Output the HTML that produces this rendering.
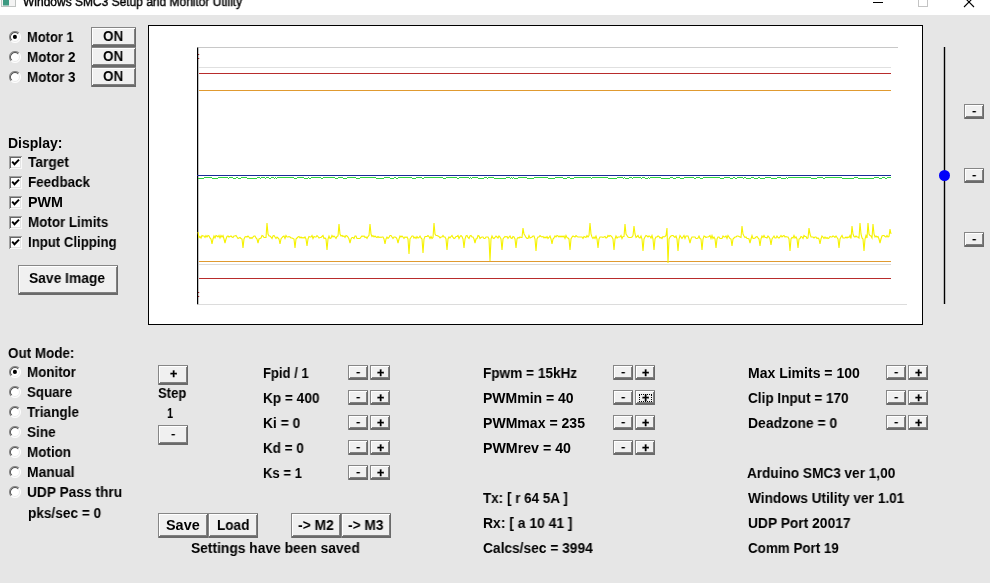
<!DOCTYPE html>
<html><head><meta charset="utf-8"><title>Windows SMC3 Setup and Monitor Utility</title>
<style>
html,body{margin:0;padding:0;}
body{width:990px;height:583px;overflow:hidden;background:#e6e6e6;position:relative;font-family:"Liberation Sans",Arial,sans-serif;font-weight:bold;font-size:14px;color:#000;}
.t{position:absolute;white-space:nowrap;line-height:18px;height:18px;transform-origin:0 50%;will-change:transform;}
.btn{position:absolute;box-sizing:border-box;background:#f0f0f0;box-shadow:inset 1px 1px 0 #868686,inset -1px -2px 0 #6a6a6a,inset 2px 2px 0 #fff,inset -2px -3px 0 #808080;}
.radio{position:absolute;width:12px;height:12px;}
.cb{position:absolute;width:13px;height:13px;box-sizing:border-box;background:#fff;box-shadow:inset 1px 1px 0 #a0a0a0,inset -1px -1px 0 #fafafa,inset 2px 2px 0 #666,inset -2px -2px 0 #e4e4e4;}
.cb svg,.radio svg{position:absolute;left:0;top:0;}
#title{position:absolute;left:0;top:0;width:990px;height:15px;background:#fff;overflow:hidden;}
#panel{position:absolute;left:148px;top:25px;width:775px;height:300px;box-sizing:border-box;border:1px solid #000;background:#fff;}
</style></head><body>

<div id="title"><svg style="position:absolute;left:0;top:0" width="20" height="8"><rect x="1.5" y="-1" width="14" height="7.5" fill="#f4f4f4" stroke="#c0c4c2"/><rect x="3" y="0" width="6" height="5.5" fill="#3d9a82"/></svg>
<svg style="position:absolute;left:860px;top:0" width="130" height="15"><rect x="13" y="2" width="10" height="1" fill="#000"/><rect x="58.5" y="-3.5" width="9" height="10" fill="none" stroke="#c4c4c4"/><path d="M104 -3L114 7M114 -3L104 7" stroke="#000" stroke-width="1.1"/></svg></div>
<div class="radio" style="left:9px;top:31px"><svg width="12" height="12" viewBox="0 0 12 12"><circle cx="6" cy="6" r="5.4" fill="#fff"/><path d="M2.1 9.9A5.5 5.5 0 0 1 9.9 2.1" fill="none" stroke="#8a8a8a" stroke-width="1.1"/><path d="M2.8 9.2A4.5 4.5 0 0 1 9.2 2.8" fill="none" stroke="#505050" stroke-width="1.1"/><path d="M2.1 9.9A5.5 5.5 0 0 0 9.9 2.1" fill="none" stroke="#fdfdfd" stroke-width="1.1"/><path d="M2.8 9.2A4.5 4.5 0 0 0 9.2 2.8" fill="none" stroke="#ececec" stroke-width="1"/><circle cx="5.9" cy="5.9" r="2.05" fill="#000"/></svg></div>
<span class="t" id="t1" style="left:27.00px;top:28.00px;transform:scaleX(0.9217);">Motor 1</span>
<div class="btn" style="left:91px;top:27px;width:45px;height:20px"></div>
<span class="t" id="t2" style="left:103.15px;top:27.00px;transform:scaleX(0.9590);">ON</span>
<div class="radio" style="left:9px;top:51px"><svg width="12" height="12" viewBox="0 0 12 12"><circle cx="6" cy="6" r="5.4" fill="#fff"/><path d="M2.1 9.9A5.5 5.5 0 0 1 9.9 2.1" fill="none" stroke="#8a8a8a" stroke-width="1.1"/><path d="M2.8 9.2A4.5 4.5 0 0 1 9.2 2.8" fill="none" stroke="#505050" stroke-width="1.1"/><path d="M2.1 9.9A5.5 5.5 0 0 0 9.9 2.1" fill="none" stroke="#fdfdfd" stroke-width="1.1"/><path d="M2.8 9.2A4.5 4.5 0 0 0 9.2 2.8" fill="none" stroke="#ececec" stroke-width="1"/></svg></div>
<span class="t" id="t3" style="left:27.00px;top:48.00px;transform:scaleX(0.9587);">Motor 2</span>
<div class="btn" style="left:91px;top:47px;width:45px;height:20px"></div>
<span class="t" id="t4" style="left:103.15px;top:47.00px;transform:scaleX(0.9590);">ON</span>
<div class="radio" style="left:9px;top:71px"><svg width="12" height="12" viewBox="0 0 12 12"><circle cx="6" cy="6" r="5.4" fill="#fff"/><path d="M2.1 9.9A5.5 5.5 0 0 1 9.9 2.1" fill="none" stroke="#8a8a8a" stroke-width="1.1"/><path d="M2.8 9.2A4.5 4.5 0 0 1 9.2 2.8" fill="none" stroke="#505050" stroke-width="1.1"/><path d="M2.1 9.9A5.5 5.5 0 0 0 9.9 2.1" fill="none" stroke="#fdfdfd" stroke-width="1.1"/><path d="M2.8 9.2A4.5 4.5 0 0 0 9.2 2.8" fill="none" stroke="#ececec" stroke-width="1"/></svg></div>
<span class="t" id="t5" style="left:27.00px;top:68.00px;transform:scaleX(0.9598);">Motor 3</span>
<div class="btn" style="left:91px;top:67px;width:45px;height:20px"></div>
<span class="t" id="t6" style="left:103.15px;top:67.00px;transform:scaleX(0.9590);">ON</span>
<span class="t" id="t7" style="left:8.00px;top:134.00px;transform:scaleX(0.9962);">Display:</span>
<div class="cb" style="left:9px;top:156px"><svg width="13" height="13" viewBox="0 0 13 13"><path d="M3.2 5.6L5.5 8.2L10 3.6" fill="none" stroke="#000" stroke-width="2"/></svg></div>
<span class="t" id="t8" style="left:28.00px;top:153.00px;transform:scaleX(0.9815);">Target</span>
<div class="cb" style="left:9px;top:176px"><svg width="13" height="13" viewBox="0 0 13 13"><path d="M3.2 5.6L5.5 8.2L10 3.6" fill="none" stroke="#000" stroke-width="2"/></svg></div>
<span class="t" id="t9" style="left:28.00px;top:173.00px;transform:scaleX(0.9603);">Feedback</span>
<div class="cb" style="left:9px;top:196px"><svg width="13" height="13" viewBox="0 0 13 13"><path d="M3.2 5.6L5.5 8.2L10 3.6" fill="none" stroke="#000" stroke-width="2"/></svg></div>
<span class="t" id="t10" style="left:28.00px;top:193.00px;transform:scaleX(1.0225);">PWM</span>
<div class="cb" style="left:9px;top:216px"><svg width="13" height="13" viewBox="0 0 13 13"><path d="M3.2 5.6L5.5 8.2L10 3.6" fill="none" stroke="#000" stroke-width="2"/></svg></div>
<span class="t" id="t11" style="left:28.00px;top:213.00px;transform:scaleX(0.9554);">Motor Limits</span>
<div class="cb" style="left:9px;top:236px"><svg width="13" height="13" viewBox="0 0 13 13"><path d="M3.2 5.6L5.5 8.2L10 3.6" fill="none" stroke="#000" stroke-width="2"/></svg></div>
<span class="t" id="t12" style="left:28.00px;top:233.00px;transform:scaleX(0.9420);">Input Clipping</span>
<div class="btn" style="left:18px;top:265px;width:100px;height:30px"></div>
<span class="t" id="t13" style="left:28.86px;top:269.30px;transform:scaleX(0.9869);">Save Image</span>
<span class="t" id="t14" style="left:8.00px;top:344.00px;transform:scaleX(0.9589);">Out Mode:</span>
<div class="radio" style="left:9px;top:366px"><svg width="12" height="12" viewBox="0 0 12 12"><circle cx="6" cy="6" r="5.4" fill="#fff"/><path d="M2.1 9.9A5.5 5.5 0 0 1 9.9 2.1" fill="none" stroke="#8a8a8a" stroke-width="1.1"/><path d="M2.8 9.2A4.5 4.5 0 0 1 9.2 2.8" fill="none" stroke="#505050" stroke-width="1.1"/><path d="M2.1 9.9A5.5 5.5 0 0 0 9.9 2.1" fill="none" stroke="#fdfdfd" stroke-width="1.1"/><path d="M2.8 9.2A4.5 4.5 0 0 0 9.2 2.8" fill="none" stroke="#ececec" stroke-width="1"/><circle cx="5.9" cy="5.9" r="2.05" fill="#000"/></svg></div>
<span class="t" id="t15" style="left:27.00px;top:363.00px;transform:scaleX(0.9532);">Monitor</span>
<div class="radio" style="left:9px;top:386px"><svg width="12" height="12" viewBox="0 0 12 12"><circle cx="6" cy="6" r="5.4" fill="#fff"/><path d="M2.1 9.9A5.5 5.5 0 0 1 9.9 2.1" fill="none" stroke="#8a8a8a" stroke-width="1.1"/><path d="M2.8 9.2A4.5 4.5 0 0 1 9.2 2.8" fill="none" stroke="#505050" stroke-width="1.1"/><path d="M2.1 9.9A5.5 5.5 0 0 0 9.9 2.1" fill="none" stroke="#fdfdfd" stroke-width="1.1"/><path d="M2.8 9.2A4.5 4.5 0 0 0 9.2 2.8" fill="none" stroke="#ececec" stroke-width="1"/></svg></div>
<span class="t" id="t16" style="left:27.00px;top:383.00px;transform:scaleX(0.9503);">Square</span>
<div class="radio" style="left:9px;top:406px"><svg width="12" height="12" viewBox="0 0 12 12"><circle cx="6" cy="6" r="5.4" fill="#fff"/><path d="M2.1 9.9A5.5 5.5 0 0 1 9.9 2.1" fill="none" stroke="#8a8a8a" stroke-width="1.1"/><path d="M2.8 9.2A4.5 4.5 0 0 1 9.2 2.8" fill="none" stroke="#505050" stroke-width="1.1"/><path d="M2.1 9.9A5.5 5.5 0 0 0 9.9 2.1" fill="none" stroke="#fdfdfd" stroke-width="1.1"/><path d="M2.8 9.2A4.5 4.5 0 0 0 9.2 2.8" fill="none" stroke="#ececec" stroke-width="1"/></svg></div>
<span class="t" id="t17" style="left:27.00px;top:403.00px;transform:scaleX(0.9661);">Triangle</span>
<div class="radio" style="left:9px;top:426px"><svg width="12" height="12" viewBox="0 0 12 12"><circle cx="6" cy="6" r="5.4" fill="#fff"/><path d="M2.1 9.9A5.5 5.5 0 0 1 9.9 2.1" fill="none" stroke="#8a8a8a" stroke-width="1.1"/><path d="M2.8 9.2A4.5 4.5 0 0 1 9.2 2.8" fill="none" stroke="#505050" stroke-width="1.1"/><path d="M2.1 9.9A5.5 5.5 0 0 0 9.9 2.1" fill="none" stroke="#fdfdfd" stroke-width="1.1"/><path d="M2.8 9.2A4.5 4.5 0 0 0 9.2 2.8" fill="none" stroke="#ececec" stroke-width="1"/></svg></div>
<span class="t" id="t18" style="left:27.00px;top:423.00px;transform:scaleX(0.9706);">Sine</span>
<div class="radio" style="left:9px;top:446px"><svg width="12" height="12" viewBox="0 0 12 12"><circle cx="6" cy="6" r="5.4" fill="#fff"/><path d="M2.1 9.9A5.5 5.5 0 0 1 9.9 2.1" fill="none" stroke="#8a8a8a" stroke-width="1.1"/><path d="M2.8 9.2A4.5 4.5 0 0 1 9.2 2.8" fill="none" stroke="#505050" stroke-width="1.1"/><path d="M2.1 9.9A5.5 5.5 0 0 0 9.9 2.1" fill="none" stroke="#fdfdfd" stroke-width="1.1"/><path d="M2.8 9.2A4.5 4.5 0 0 0 9.2 2.8" fill="none" stroke="#ececec" stroke-width="1"/></svg></div>
<span class="t" id="t19" style="left:27.00px;top:443.00px;transform:scaleX(0.9592);">Motion</span>
<div class="radio" style="left:9px;top:466px"><svg width="12" height="12" viewBox="0 0 12 12"><circle cx="6" cy="6" r="5.4" fill="#fff"/><path d="M2.1 9.9A5.5 5.5 0 0 1 9.9 2.1" fill="none" stroke="#8a8a8a" stroke-width="1.1"/><path d="M2.8 9.2A4.5 4.5 0 0 1 9.2 2.8" fill="none" stroke="#505050" stroke-width="1.1"/><path d="M2.1 9.9A5.5 5.5 0 0 0 9.9 2.1" fill="none" stroke="#fdfdfd" stroke-width="1.1"/><path d="M2.8 9.2A4.5 4.5 0 0 0 9.2 2.8" fill="none" stroke="#ececec" stroke-width="1"/></svg></div>
<span class="t" id="t20" style="left:27.00px;top:463.00px;transform:scaleX(0.9873);">Manual</span>
<div class="radio" style="left:9px;top:486px"><svg width="12" height="12" viewBox="0 0 12 12"><circle cx="6" cy="6" r="5.4" fill="#fff"/><path d="M2.1 9.9A5.5 5.5 0 0 1 9.9 2.1" fill="none" stroke="#8a8a8a" stroke-width="1.1"/><path d="M2.8 9.2A4.5 4.5 0 0 1 9.2 2.8" fill="none" stroke="#505050" stroke-width="1.1"/><path d="M2.1 9.9A5.5 5.5 0 0 0 9.9 2.1" fill="none" stroke="#fdfdfd" stroke-width="1.1"/><path d="M2.8 9.2A4.5 4.5 0 0 0 9.2 2.8" fill="none" stroke="#ececec" stroke-width="1"/></svg></div>
<span class="t" id="t21" style="left:27.00px;top:483.00px;transform:scaleX(0.9806);">UDP Pass thru</span>
<span class="t" id="t22" style="left:28.00px;top:504.00px;transform:scaleX(0.9747);">pks/sec = 0</span>
<div class="btn" style="left:158px;top:365px;width:30px;height:20px"></div>
<span class="t" id="t23" style="left:169.69px;top:365.47px;transform:scaleX(1.0000);font-size:12.5px;-webkit-text-stroke:0.3px #000;">+</span>
<span class="t" id="t24" style="left:158.00px;top:384.00px;transform:scaleX(0.9355);">Step</span>
<span class="t" id="t25" style="left:167.00px;top:404.00px;transform:scaleX(0.8000);">1</span>
<div class="btn" style="left:158px;top:425px;width:30px;height:20px"></div>
<span class="t" id="t26" style="left:170.62px;top:424.50px;transform:scaleX(0.9308);font-weight:normal;-webkit-text-stroke:0.2px #000;">-</span>
<div class="btn" style="left:158px;top:513px;width:50px;height:25px"></div>
<span class="t" id="t27" style="left:165.74px;top:516.00px;transform:scaleX(1.0297);">Save</span>
<div class="btn" style="left:208px;top:513px;width:50px;height:25px"></div>
<span class="t" id="t28" style="left:217.10px;top:516.00px;transform:scaleX(0.9683);">Load</span>
<div class="btn" style="left:291px;top:513px;width:50px;height:25px"></div>
<span class="t" id="t29" style="left:297.77px;top:516.00px;transform:scaleX(0.9860);">-&gt; M2</span>
<div class="btn" style="left:341px;top:513px;width:50px;height:25px"></div>
<span class="t" id="t30" style="left:347.77px;top:516.00px;transform:scaleX(0.9784);">-&gt; M3</span>
<span class="t" id="t31" style="left:191.00px;top:539.00px;transform:scaleX(0.9856);">Settings have been saved</span>
<span class="t" id="t32" style="left:263.00px;top:364.00px;transform:scaleX(0.9314);">Fpid / 1</span>
<div class="btn" style="left:348px;top:365px;width:20px;height:15px"></div>
<span class="t" id="t33" style="left:355.62px;top:363.00px;transform:scaleX(0.9308);font-weight:normal;-webkit-text-stroke:0.2px #000;">-</span>
<div class="btn" style="left:370px;top:365px;width:20px;height:15px"></div>
<span class="t" id="t34" style="left:376.90px;top:363.87px;transform:scaleX(1.0000);font-size:12.5px;-webkit-text-stroke:0.3px #000;">+</span>
<span class="t" id="t35" style="left:263.00px;top:389.00px;transform:scaleX(0.9735);">Kp = 400</span>
<div class="btn" style="left:348px;top:390px;width:20px;height:15px"></div>
<span class="t" id="t36" style="left:355.62px;top:388.00px;transform:scaleX(0.9308);font-weight:normal;-webkit-text-stroke:0.2px #000;">-</span>
<div class="btn" style="left:370px;top:390px;width:20px;height:15px"></div>
<span class="t" id="t37" style="left:376.90px;top:388.87px;transform:scaleX(1.0000);font-size:12.5px;-webkit-text-stroke:0.3px #000;">+</span>
<span class="t" id="t38" style="left:263.00px;top:414.00px;transform:scaleX(0.9858);">Ki = 0</span>
<div class="btn" style="left:348px;top:415px;width:20px;height:15px"></div>
<span class="t" id="t39" style="left:355.62px;top:413.00px;transform:scaleX(0.9308);font-weight:normal;-webkit-text-stroke:0.2px #000;">-</span>
<div class="btn" style="left:370px;top:415px;width:20px;height:15px"></div>
<span class="t" id="t40" style="left:376.90px;top:413.87px;transform:scaleX(1.0000);font-size:12.5px;-webkit-text-stroke:0.3px #000;">+</span>
<span class="t" id="t41" style="left:263.00px;top:439.00px;transform:scaleX(0.9638);">Kd = 0</span>
<div class="btn" style="left:348px;top:440px;width:20px;height:15px"></div>
<span class="t" id="t42" style="left:355.62px;top:438.00px;transform:scaleX(0.9308);font-weight:normal;-webkit-text-stroke:0.2px #000;">-</span>
<div class="btn" style="left:370px;top:440px;width:20px;height:15px"></div>
<span class="t" id="t43" style="left:376.90px;top:438.87px;transform:scaleX(1.0000);font-size:12.5px;-webkit-text-stroke:0.3px #000;">+</span>
<span class="t" id="t44" style="left:263.00px;top:464.00px;transform:scaleX(0.9380);">Ks = 1</span>
<div class="btn" style="left:348px;top:465px;width:20px;height:15px"></div>
<span class="t" id="t45" style="left:355.62px;top:463.00px;transform:scaleX(0.9308);font-weight:normal;-webkit-text-stroke:0.2px #000;">-</span>
<div class="btn" style="left:370px;top:465px;width:20px;height:15px"></div>
<span class="t" id="t46" style="left:376.90px;top:463.87px;transform:scaleX(1.0000);font-size:12.5px;-webkit-text-stroke:0.3px #000;">+</span>
<span class="t" id="t47" style="left:483.00px;top:364.00px;transform:scaleX(0.9720);">Fpwm = 15kHz</span>
<div class="btn" style="left:613px;top:365px;width:20px;height:15px"></div>
<span class="t" id="t48" style="left:620.62px;top:363.00px;transform:scaleX(0.9308);font-weight:normal;-webkit-text-stroke:0.2px #000;">-</span>
<div class="btn" style="left:635px;top:365px;width:20px;height:15px"></div>
<span class="t" id="t49" style="left:641.90px;top:363.87px;transform:scaleX(1.0000);font-size:12.5px;-webkit-text-stroke:0.3px #000;">+</span>
<span class="t" id="t50" style="left:483.00px;top:389.00px;transform:scaleX(0.9962);">PWMmin = 40</span>
<div class="btn" style="left:613px;top:390px;width:20px;height:15px"></div>
<span class="t" id="t51" style="left:620.62px;top:388.00px;transform:scaleX(0.9308);font-weight:normal;-webkit-text-stroke:0.2px #000;">-</span>
<div class="btn" style="left:635px;top:390px;width:20px;height:15px"></div>
<span class="t" id="t52" style="left:641.90px;top:388.87px;transform:scaleX(1.0000);font-size:12.5px;-webkit-text-stroke:0.3px #000;">+</span>
<span class="t" id="t53" style="left:483.00px;top:414.00px;transform:scaleX(1.0043);">PWMmax = 235</span>
<div class="btn" style="left:613px;top:415px;width:20px;height:15px"></div>
<span class="t" id="t54" style="left:620.62px;top:413.00px;transform:scaleX(0.9308);font-weight:normal;-webkit-text-stroke:0.2px #000;">-</span>
<div class="btn" style="left:635px;top:415px;width:20px;height:15px"></div>
<span class="t" id="t55" style="left:641.90px;top:413.87px;transform:scaleX(1.0000);font-size:12.5px;-webkit-text-stroke:0.3px #000;">+</span>
<span class="t" id="t56" style="left:483.00px;top:439.00px;transform:scaleX(1.0135);">PWMrev = 40</span>
<div class="btn" style="left:613px;top:440px;width:20px;height:15px"></div>
<span class="t" id="t57" style="left:620.62px;top:438.00px;transform:scaleX(0.9308);font-weight:normal;-webkit-text-stroke:0.2px #000;">-</span>
<div class="btn" style="left:635px;top:440px;width:20px;height:15px"></div>
<span class="t" id="t58" style="left:641.90px;top:438.87px;transform:scaleX(1.0000);font-size:12.5px;-webkit-text-stroke:0.3px #000;">+</span>
<span class="t" id="t59" style="left:483.00px;top:489.00px;transform:scaleX(0.9612);">Tx: [ r 64 5A ]</span>
<span class="t" id="t60" style="left:483.00px;top:514.00px;transform:scaleX(0.9917);">Rx: [ a 10 41 ]</span>
<span class="t" id="t61" style="left:483.00px;top:539.00px;transform:scaleX(0.9829);">Calcs/sec = 3994</span>
<span class="t" id="t62" style="left:748.00px;top:364.00px;transform:scaleX(1.0012);">Max Limits = 100</span>
<div class="btn" style="left:886px;top:365px;width:20px;height:15px"></div>
<span class="t" id="t63" style="left:893.62px;top:363.00px;transform:scaleX(0.9308);font-weight:normal;-webkit-text-stroke:0.2px #000;">-</span>
<div class="btn" style="left:908px;top:365px;width:20px;height:15px"></div>
<span class="t" id="t64" style="left:914.90px;top:363.87px;transform:scaleX(1.0000);font-size:12.5px;-webkit-text-stroke:0.3px #000;">+</span>
<span class="t" id="t65" style="left:748.00px;top:389.00px;transform:scaleX(0.9686);">Clip Input = 170</span>
<div class="btn" style="left:886px;top:390px;width:20px;height:15px"></div>
<span class="t" id="t66" style="left:893.62px;top:388.00px;transform:scaleX(0.9308);font-weight:normal;-webkit-text-stroke:0.2px #000;">-</span>
<div class="btn" style="left:908px;top:390px;width:20px;height:15px"></div>
<span class="t" id="t67" style="left:914.90px;top:388.87px;transform:scaleX(1.0000);font-size:12.5px;-webkit-text-stroke:0.3px #000;">+</span>
<span class="t" id="t68" style="left:748.00px;top:414.00px;transform:scaleX(0.9930);">Deadzone = 0</span>
<div class="btn" style="left:886px;top:415px;width:20px;height:15px"></div>
<span class="t" id="t69" style="left:893.62px;top:413.00px;transform:scaleX(0.9308);font-weight:normal;-webkit-text-stroke:0.2px #000;">-</span>
<div class="btn" style="left:908px;top:415px;width:20px;height:15px"></div>
<span class="t" id="t70" style="left:914.90px;top:413.87px;transform:scaleX(1.0000);font-size:12.5px;-webkit-text-stroke:0.3px #000;">+</span>
<span class="t" id="t71" style="left:747.00px;top:464.00px;transform:scaleX(0.9720);">Arduino SMC3 ver 1,00</span>
<span class="t" id="t72" style="left:748.00px;top:489.00px;transform:scaleX(0.9763);">Windows Utility ver 1.01</span>
<span class="t" id="t73" style="left:748.00px;top:514.00px;transform:scaleX(0.9857);">UDP Port 20017</span>
<span class="t" id="t74" style="left:748.00px;top:539.00px;transform:scaleX(0.9577);">Comm Port 19</span>
<div id="panel"></div>
<svg style="position:absolute;left:148px;top:25px" width="775" height="300" viewBox="148 25 775 300" shape-rendering="crispEdges"><rect x="197" y="47" width="701" height="1" fill="#c8c8c8"/><rect x="199" y="67" width="692" height="1" fill="#e0e0e0"/><rect x="199" y="73" width="692" height="1" fill="#b82c2c"/><rect x="199" y="90" width="692" height="1" fill="#e09a30"/><rect x="199" y="261" width="692" height="1" fill="#e09a30"/><rect x="199" y="264" width="692" height="1" fill="#dcdcdc"/><rect x="199" y="278" width="692" height="1" fill="#b82c2c"/><rect x="197" y="304" width="710" height="1" fill="#dcdcdc"/><rect x="197" y="47.6" width="1.25" height="256.6" fill="#000" shape-rendering="auto"/><rect x="198" y="54" width="1.2" height="1" fill="#8a1c1c" shape-rendering="auto"/><rect x="198" y="58" width="1.2" height="1" fill="#8a1c1c" shape-rendering="auto"/><rect x="198" y="292" width="1.2" height="1" fill="#8a1c1c" shape-rendering="auto"/><rect x="198" y="296" width="1.2" height="1" fill="#8a1c1c" shape-rendering="auto"/><rect x="197" y="175" width="694" height="1" fill="#1a2a9a"/><rect x="198" y="178" width="6" height="1" fill="#2fd040"/><rect x="204" y="177" width="6" height="1" fill="#2fd040"/><rect x="210" y="177" width="2" height="1" fill="#2fd040"/><rect x="212" y="178" width="6" height="1" fill="#2fd040"/><rect x="218" y="177" width="2" height="1" fill="#2fd040"/><rect x="220" y="177" width="6" height="1" fill="#2fd040"/><rect x="226" y="177" width="2" height="1" fill="#2fd040"/><rect x="228" y="178" width="1" height="1" fill="#2fd040"/><rect x="229" y="177" width="4" height="1" fill="#2fd040"/><rect x="233" y="178" width="2" height="1" fill="#2fd040"/><rect x="235" y="178" width="1" height="1" fill="#2fd040"/><rect x="236" y="177" width="1" height="1" fill="#2fd040"/><rect x="237" y="177" width="1" height="1" fill="#2fd040"/><rect x="238" y="178" width="2" height="1" fill="#2fd040"/><rect x="240" y="178" width="1" height="1" fill="#2fd040"/><rect x="241" y="177" width="6" height="1" fill="#2fd040"/><rect x="247" y="178" width="6" height="1" fill="#2fd040"/><rect x="253" y="178" width="2" height="1" fill="#2fd040"/><rect x="255" y="178" width="2" height="1" fill="#2fd040"/><rect x="257" y="177" width="3" height="1" fill="#2fd040"/><rect x="260" y="178" width="1" height="1" fill="#2fd040"/><rect x="261" y="177" width="1" height="1" fill="#2fd040"/><rect x="262" y="177" width="3" height="1" fill="#2fd040"/><rect x="265" y="178" width="1" height="1" fill="#2fd040"/><rect x="266" y="177" width="3" height="1" fill="#2fd040"/><rect x="269" y="178" width="2" height="1" fill="#2fd040"/><rect x="271" y="177" width="3" height="1" fill="#2fd040"/><rect x="274" y="178" width="1" height="1" fill="#2fd040"/><rect x="275" y="177" width="1" height="1" fill="#2fd040"/><rect x="276" y="178" width="1" height="1" fill="#2fd040"/><rect x="277" y="177" width="3" height="1" fill="#2fd040"/><rect x="280" y="177" width="1" height="1" fill="#2fd040"/><rect x="281" y="177" width="1" height="1" fill="#2fd040"/><rect x="282" y="177" width="2" height="1" fill="#2fd040"/><rect x="284" y="177" width="6" height="1" fill="#2fd040"/><rect x="290" y="177" width="4" height="1" fill="#2fd040"/><rect x="294" y="178" width="1" height="1" fill="#2fd040"/><rect x="295" y="178" width="2" height="1" fill="#2fd040"/><rect x="297" y="177" width="3" height="1" fill="#2fd040"/><rect x="300" y="177" width="1" height="1" fill="#2fd040"/><rect x="301" y="177" width="3" height="1" fill="#2fd040"/><rect x="304" y="178" width="4" height="1" fill="#2fd040"/><rect x="308" y="177" width="1" height="1" fill="#2fd040"/><rect x="309" y="178" width="2" height="1" fill="#2fd040"/><rect x="311" y="177" width="1" height="1" fill="#2fd040"/><rect x="312" y="177" width="1" height="1" fill="#2fd040"/><rect x="313" y="177" width="6" height="1" fill="#2fd040"/><rect x="319" y="177" width="2" height="1" fill="#2fd040"/><rect x="321" y="178" width="2" height="1" fill="#2fd040"/><rect x="323" y="177" width="2" height="1" fill="#2fd040"/><rect x="325" y="177" width="4" height="1" fill="#2fd040"/><rect x="329" y="177" width="4" height="1" fill="#2fd040"/><rect x="333" y="177" width="2" height="1" fill="#2fd040"/><rect x="335" y="178" width="3" height="1" fill="#2fd040"/><rect x="338" y="177" width="3" height="1" fill="#2fd040"/><rect x="341" y="177" width="2" height="1" fill="#2fd040"/><rect x="343" y="178" width="4" height="1" fill="#2fd040"/><rect x="347" y="177" width="1" height="1" fill="#2fd040"/><rect x="348" y="177" width="2" height="1" fill="#2fd040"/><rect x="350" y="177" width="6" height="1" fill="#2fd040"/><rect x="356" y="178" width="1" height="1" fill="#2fd040"/><rect x="357" y="178" width="3" height="1" fill="#2fd040"/><rect x="360" y="177" width="3" height="1" fill="#2fd040"/><rect x="363" y="177" width="1" height="1" fill="#2fd040"/><rect x="364" y="177" width="1" height="1" fill="#2fd040"/><rect x="365" y="177" width="2" height="1" fill="#2fd040"/><rect x="367" y="177" width="3" height="1" fill="#2fd040"/><rect x="370" y="177" width="6" height="1" fill="#2fd040"/><rect x="376" y="178" width="6" height="1" fill="#2fd040"/><rect x="382" y="178" width="2" height="1" fill="#2fd040"/><rect x="384" y="177" width="4" height="1" fill="#2fd040"/><rect x="388" y="177" width="2" height="1" fill="#2fd040"/><rect x="390" y="178" width="2" height="1" fill="#2fd040"/><rect x="392" y="178" width="2" height="1" fill="#2fd040"/><rect x="394" y="177" width="2" height="1" fill="#2fd040"/><rect x="396" y="178" width="2" height="1" fill="#2fd040"/><rect x="398" y="177" width="4" height="1" fill="#2fd040"/><rect x="402" y="177" width="1" height="1" fill="#2fd040"/><rect x="403" y="177" width="1" height="1" fill="#2fd040"/><rect x="404" y="177" width="1" height="1" fill="#2fd040"/><rect x="405" y="177" width="3" height="1" fill="#2fd040"/><rect x="408" y="177" width="4" height="1" fill="#2fd040"/><rect x="412" y="178" width="4" height="1" fill="#2fd040"/><rect x="416" y="177" width="6" height="1" fill="#2fd040"/><rect x="422" y="178" width="2" height="1" fill="#2fd040"/><rect x="424" y="177" width="1" height="1" fill="#2fd040"/><rect x="425" y="177" width="2" height="1" fill="#2fd040"/><rect x="427" y="177" width="1" height="1" fill="#2fd040"/><rect x="428" y="177" width="2" height="1" fill="#2fd040"/><rect x="430" y="177" width="1" height="1" fill="#2fd040"/><rect x="431" y="177" width="3" height="1" fill="#2fd040"/><rect x="434" y="177" width="6" height="1" fill="#2fd040"/><rect x="440" y="177" width="1" height="1" fill="#2fd040"/><rect x="441" y="177" width="2" height="1" fill="#2fd040"/><rect x="443" y="178" width="3" height="1" fill="#2fd040"/><rect x="446" y="177" width="2" height="1" fill="#2fd040"/><rect x="448" y="177" width="3" height="1" fill="#2fd040"/><rect x="451" y="177" width="6" height="1" fill="#2fd040"/><rect x="457" y="178" width="2" height="1" fill="#2fd040"/><rect x="459" y="177" width="1" height="1" fill="#2fd040"/><rect x="460" y="177" width="6" height="1" fill="#2fd040"/><rect x="466" y="177" width="3" height="1" fill="#2fd040"/><rect x="469" y="178" width="1" height="1" fill="#2fd040"/><rect x="470" y="177" width="1" height="1" fill="#2fd040"/><rect x="471" y="178" width="1" height="1" fill="#2fd040"/><rect x="472" y="177" width="3" height="1" fill="#2fd040"/><rect x="475" y="177" width="2" height="1" fill="#2fd040"/><rect x="477" y="177" width="1" height="1" fill="#2fd040"/><rect x="478" y="178" width="3" height="1" fill="#2fd040"/><rect x="481" y="178" width="1" height="1" fill="#2fd040"/><rect x="482" y="178" width="2" height="1" fill="#2fd040"/><rect x="484" y="177" width="3" height="1" fill="#2fd040"/><rect x="487" y="178" width="1" height="1" fill="#2fd040"/><rect x="488" y="177" width="6" height="1" fill="#2fd040"/><rect x="494" y="178" width="4" height="1" fill="#2fd040"/><rect x="498" y="178" width="1" height="1" fill="#2fd040"/><rect x="499" y="178" width="6" height="1" fill="#2fd040"/><rect x="505" y="178" width="1" height="1" fill="#2fd040"/><rect x="506" y="177" width="4" height="1" fill="#2fd040"/><rect x="510" y="178" width="1" height="1" fill="#2fd040"/><rect x="511" y="177" width="1" height="1" fill="#2fd040"/><rect x="512" y="178" width="1" height="1" fill="#2fd040"/><rect x="513" y="177" width="1" height="1" fill="#2fd040"/><rect x="514" y="178" width="4" height="1" fill="#2fd040"/><rect x="518" y="177" width="3" height="1" fill="#2fd040"/><rect x="521" y="177" width="6" height="1" fill="#2fd040"/><rect x="527" y="178" width="6" height="1" fill="#2fd040"/><rect x="533" y="178" width="1" height="1" fill="#2fd040"/><rect x="534" y="177" width="1" height="1" fill="#2fd040"/><rect x="535" y="177" width="1" height="1" fill="#2fd040"/><rect x="536" y="177" width="1" height="1" fill="#2fd040"/><rect x="537" y="177" width="1" height="1" fill="#2fd040"/><rect x="538" y="177" width="6" height="1" fill="#2fd040"/><rect x="544" y="177" width="1" height="1" fill="#2fd040"/><rect x="545" y="177" width="3" height="1" fill="#2fd040"/><rect x="548" y="178" width="2" height="1" fill="#2fd040"/><rect x="550" y="178" width="2" height="1" fill="#2fd040"/><rect x="552" y="178" width="3" height="1" fill="#2fd040"/><rect x="555" y="177" width="6" height="1" fill="#2fd040"/><rect x="561" y="177" width="2" height="1" fill="#2fd040"/><rect x="563" y="178" width="4" height="1" fill="#2fd040"/><rect x="567" y="177" width="3" height="1" fill="#2fd040"/><rect x="570" y="178" width="4" height="1" fill="#2fd040"/><rect x="574" y="177" width="2" height="1" fill="#2fd040"/><rect x="576" y="177" width="4" height="1" fill="#2fd040"/><rect x="580" y="177" width="3" height="1" fill="#2fd040"/><rect x="583" y="177" width="2" height="1" fill="#2fd040"/><rect x="585" y="177" width="6" height="1" fill="#2fd040"/><rect x="591" y="178" width="1" height="1" fill="#2fd040"/><rect x="592" y="177" width="1" height="1" fill="#2fd040"/><rect x="593" y="177" width="2" height="1" fill="#2fd040"/><rect x="595" y="177" width="6" height="1" fill="#2fd040"/><rect x="601" y="177" width="3" height="1" fill="#2fd040"/><rect x="604" y="177" width="4" height="1" fill="#2fd040"/><rect x="608" y="178" width="6" height="1" fill="#2fd040"/><rect x="614" y="178" width="3" height="1" fill="#2fd040"/><rect x="617" y="177" width="6" height="1" fill="#2fd040"/><rect x="623" y="178" width="1" height="1" fill="#2fd040"/><rect x="624" y="177" width="1" height="1" fill="#2fd040"/><rect x="625" y="178" width="1" height="1" fill="#2fd040"/><rect x="626" y="178" width="3" height="1" fill="#2fd040"/><rect x="629" y="177" width="3" height="1" fill="#2fd040"/><rect x="632" y="178" width="1" height="1" fill="#2fd040"/><rect x="633" y="177" width="2" height="1" fill="#2fd040"/><rect x="635" y="177" width="6" height="1" fill="#2fd040"/><rect x="641" y="178" width="1" height="1" fill="#2fd040"/><rect x="642" y="177" width="3" height="1" fill="#2fd040"/><rect x="645" y="178" width="2" height="1" fill="#2fd040"/><rect x="647" y="178" width="1" height="1" fill="#2fd040"/><rect x="648" y="177" width="1" height="1" fill="#2fd040"/><rect x="649" y="178" width="1" height="1" fill="#2fd040"/><rect x="650" y="177" width="3" height="1" fill="#2fd040"/><rect x="653" y="177" width="2" height="1" fill="#2fd040"/><rect x="655" y="177" width="6" height="1" fill="#2fd040"/><rect x="661" y="178" width="2" height="1" fill="#2fd040"/><rect x="663" y="178" width="1" height="1" fill="#2fd040"/><rect x="664" y="178" width="6" height="1" fill="#2fd040"/><rect x="670" y="177" width="1" height="1" fill="#2fd040"/><rect x="671" y="177" width="2" height="1" fill="#2fd040"/><rect x="673" y="178" width="3" height="1" fill="#2fd040"/><rect x="676" y="177" width="2" height="1" fill="#2fd040"/><rect x="678" y="177" width="2" height="1" fill="#2fd040"/><rect x="680" y="178" width="4" height="1" fill="#2fd040"/><rect x="684" y="177" width="4" height="1" fill="#2fd040"/><rect x="688" y="177" width="6" height="1" fill="#2fd040"/><rect x="694" y="178" width="2" height="1" fill="#2fd040"/><rect x="696" y="177" width="1" height="1" fill="#2fd040"/><rect x="697" y="177" width="3" height="1" fill="#2fd040"/><rect x="700" y="178" width="3" height="1" fill="#2fd040"/><rect x="703" y="177" width="2" height="1" fill="#2fd040"/><rect x="705" y="177" width="1" height="1" fill="#2fd040"/><rect x="706" y="177" width="2" height="1" fill="#2fd040"/><rect x="708" y="177" width="1" height="1" fill="#2fd040"/><rect x="709" y="177" width="3" height="1" fill="#2fd040"/><rect x="712" y="177" width="1" height="1" fill="#2fd040"/><rect x="713" y="177" width="1" height="1" fill="#2fd040"/><rect x="714" y="177" width="6" height="1" fill="#2fd040"/><rect x="720" y="178" width="4" height="1" fill="#2fd040"/><rect x="724" y="177" width="3" height="1" fill="#2fd040"/><rect x="727" y="177" width="1" height="1" fill="#2fd040"/><rect x="728" y="177" width="1" height="1" fill="#2fd040"/><rect x="729" y="177" width="1" height="1" fill="#2fd040"/><rect x="730" y="178" width="3" height="1" fill="#2fd040"/><rect x="733" y="177" width="2" height="1" fill="#2fd040"/><rect x="735" y="178" width="2" height="1" fill="#2fd040"/><rect x="737" y="177" width="6" height="1" fill="#2fd040"/><rect x="743" y="178" width="1" height="1" fill="#2fd040"/><rect x="744" y="177" width="2" height="1" fill="#2fd040"/><rect x="746" y="178" width="3" height="1" fill="#2fd040"/><rect x="749" y="178" width="2" height="1" fill="#2fd040"/><rect x="751" y="177" width="3" height="1" fill="#2fd040"/><rect x="754" y="178" width="4" height="1" fill="#2fd040"/><rect x="758" y="177" width="2" height="1" fill="#2fd040"/><rect x="760" y="178" width="2" height="1" fill="#2fd040"/><rect x="762" y="178" width="3" height="1" fill="#2fd040"/><rect x="765" y="177" width="6" height="1" fill="#2fd040"/><rect x="771" y="178" width="4" height="1" fill="#2fd040"/><rect x="775" y="178" width="1" height="1" fill="#2fd040"/><rect x="776" y="178" width="1" height="1" fill="#2fd040"/><rect x="777" y="177" width="4" height="1" fill="#2fd040"/><rect x="781" y="178" width="1" height="1" fill="#2fd040"/><rect x="782" y="178" width="4" height="1" fill="#2fd040"/><rect x="786" y="177" width="1" height="1" fill="#2fd040"/><rect x="787" y="178" width="1" height="1" fill="#2fd040"/><rect x="788" y="177" width="2" height="1" fill="#2fd040"/><rect x="790" y="177" width="6" height="1" fill="#2fd040"/><rect x="796" y="177" width="4" height="1" fill="#2fd040"/><rect x="800" y="177" width="2" height="1" fill="#2fd040"/><rect x="802" y="177" width="6" height="1" fill="#2fd040"/><rect x="808" y="177" width="3" height="1" fill="#2fd040"/><rect x="811" y="178" width="6" height="1" fill="#2fd040"/><rect x="817" y="177" width="3" height="1" fill="#2fd040"/><rect x="820" y="177" width="2" height="1" fill="#2fd040"/><rect x="822" y="177" width="1" height="1" fill="#2fd040"/><rect x="823" y="178" width="2" height="1" fill="#2fd040"/><rect x="825" y="177" width="1" height="1" fill="#2fd040"/><rect x="826" y="177" width="2" height="1" fill="#2fd040"/><rect x="828" y="177" width="2" height="1" fill="#2fd040"/><rect x="830" y="177" width="3" height="1" fill="#2fd040"/><rect x="833" y="177" width="3" height="1" fill="#2fd040"/><rect x="836" y="177" width="6" height="1" fill="#2fd040"/><rect x="842" y="178" width="6" height="1" fill="#2fd040"/><rect x="848" y="178" width="1" height="1" fill="#2fd040"/><rect x="849" y="178" width="3" height="1" fill="#2fd040"/><rect x="852" y="178" width="2" height="1" fill="#2fd040"/><rect x="854" y="177" width="4" height="1" fill="#2fd040"/><rect x="858" y="178" width="4" height="1" fill="#2fd040"/><rect x="862" y="178" width="4" height="1" fill="#2fd040"/><rect x="866" y="178" width="2" height="1" fill="#2fd040"/><rect x="868" y="178" width="2" height="1" fill="#2fd040"/><rect x="870" y="178" width="2" height="1" fill="#2fd040"/><rect x="872" y="178" width="2" height="1" fill="#2fd040"/><rect x="874" y="177" width="2" height="1" fill="#2fd040"/><rect x="876" y="177" width="3" height="1" fill="#2fd040"/><rect x="879" y="178" width="3" height="1" fill="#2fd040"/><rect x="882" y="177" width="3" height="1" fill="#2fd040"/><rect x="885" y="178" width="2" height="1" fill="#2fd040"/><rect x="887" y="177" width="2" height="1" fill="#2fd040"/><rect x="889" y="177" width="2" height="1" fill="#2fd040"/><polyline shape-rendering="auto" fill="none" stroke="#f6f200" stroke-width="1.1" points="198,232 199,237.5 200,236.5 201,238.0 202,235.5 203,236.0 204,236.0 205,237.5 206,235.5 207,237.0 208,235.5 209,236.0 210,238.0 211,239.0 212,244.0 213,239.0 214,236.0 215,238.0 216,235.5 217,236.0 218,237.0 219,235.5 220,238.0 221,235.5 222,237.0 223,235.5 224,239.0 225,243.0 226,239.0 227,236.5 228,236.0 229,237.0 230,236.5 231,236.0 232,237.0 233,237.5 234,236.0 235,236.0 236,235.5 237,237.0 238,238.5 239,238.0 240,237.5 241,238.5 242,239.0 243,248.0 244,239.0 245,237.0 246,236.5 247,237.0 248,236.0 249,237.0 250,238.5 251,237.5 252,238.5 253,237.0 254,236.0 255,236.0 256,238.0 257,239.0 258,243.0 259,239.0 260,238.5 261,238.0 262,235.5 263,236.0 264,237.5 265,237.5 266,237.5 267,223.0 268,234.0 269,236.0 270,236.0 271,237.0 272,238.5 273,236.0 274,235.5 275,237.0 276,238.5 277,237.0 278,238.0 279,239.0 280,244.0 281,239.0 282,237.5 283,236.5 284,236.0 285,238.5 286,235.5 287,237.0 288,237.0 289,236.5 290,237.0 291,238.0 292,238.0 293,238.5 294,239.0 295,248.0 296,239.0 297,238.0 298,237.0 299,236.5 300,238.0 301,237.0 302,238.0 303,237.5 304,238.0 305,237.0 306,239.0 307,246.0 308,239.0 309,236.5 310,237.0 311,237.0 312,235.5 313,238.5 314,236.5 315,237.0 316,237.0 317,235.5 318,236.5 319,238.0 320,237.5 321,237.5 322,236.5 323,235.5 324,238.5 325,238.0 326,239.0 327,250.0 328,239.0 329,236.0 330,238.5 331,238.0 332,235.5 333,237.0 334,236.0 335,237.0 336,238.5 337,236.5 338,236.0 339,224.0 340,234.0 341,236.0 342,235.5 343,236.5 344,236.0 345,237.5 346,235.5 347,236.0 348,237.0 349,239.0 350,243.0 351,239.0 352,237.5 353,237.5 354,238.5 355,236.0 356,236.0 357,238.5 358,238.5 359,238.5 360,238.5 361,237.0 362,236.0 363,236.5 364,236.0 365,237.5 366,237.0 367,238.5 368,236.5 369,235.5 370,224.0 371,234.0 372,236.5 373,235.5 374,237.0 375,236.0 376,237.0 377,237.5 378,236.5 379,237.5 380,237.0 381,237.5 382,237.0 383,237.0 384,239.0 385,244.0 386,239.0 387,237.0 388,238.5 389,237.5 390,235.5 391,235.5 392,237.0 393,238.5 394,237.0 395,237.0 396,237.5 397,239.0 398,243.0 399,239.0 400,236.0 401,237.0 402,236.0 403,237.0 404,238.5 405,237.0 406,237.5 407,237.0 408,239.0 409,254.0 410,239.0 411,237.5 412,236.0 413,236.0 414,238.0 415,237.0 416,238.5 417,236.5 418,238.0 419,237.5 420,236.0 421,238.0 422,239.0 423,253.0 424,239.0 425,236.5 426,236.5 427,236.5 428,235.5 429,236.5 430,238.5 431,236.5 432,238.5 433,237.5 434,223.0 435,234.0 436,235.5 437,235.5 438,236.0 439,236.5 440,238.0 441,237.0 442,237.0 443,235.5 444,237.0 445,237.0 446,239.0 447,250.0 448,239.0 449,237.0 450,238.0 451,236.5 452,235.5 453,237.5 454,238.5 455,238.0 456,236.5 457,236.5 458,235.5 459,238.5 460,236.5 461,235.5 462,236.5 463,239.0 464,248.0 465,239.0 466,236.0 467,235.5 468,237.5 469,238.5 470,236.0 471,235.5 472,237.0 473,237.0 474,239.0 475,243.0 476,239.0 477,238.5 478,235.5 479,236.0 480,238.5 481,237.5 482,237.0 483,237.0 484,238.5 485,238.5 486,237.0 487,237.0 488,237.0 489,239.0 490,261.0 491,239.0 492,236.0 493,238.0 494,238.5 495,237.5 496,236.0 497,237.0 498,238.0 499,236.0 500,237.0 501,239.0 502,250.0 503,239.0 504,237.5 505,236.5 506,237.0 507,236.5 508,238.5 509,237.0 510,236.0 511,238.0 512,238.5 513,236.5 514,237.0 515,239.0 516,248.0 517,239.0 518,237.5 519,238.0 520,237.0 521,237.5 522,237.5 523,228.0 524,234.0 525,235.5 526,237.5 527,238.5 528,238.5 529,235.5 530,238.0 531,237.5 532,237.0 533,236.0 534,236.0 535,239.0 536,251.0 537,239.0 538,237.0 539,237.0 540,235.5 541,236.5 542,237.0 543,236.5 544,238.0 545,237.0 546,238.0 547,236.5 548,238.5 549,237.5 550,236.0 551,239.0 552,244.0 553,239.0 554,238.0 555,236.0 556,237.0 557,235.5 558,236.0 559,237.0 560,236.0 561,237.0 562,236.0 563,237.0 564,236.0 565,238.5 566,235.5 567,237.5 568,238.0 569,239.0 570,250.0 571,239.0 572,237.0 573,236.0 574,236.5 575,237.0 576,235.5 577,236.5 578,237.0 579,237.0 580,237.0 581,237.0 582,237.0 583,238.5 584,236.5 585,237.0 586,237.5 587,235.5 588,237.0 589,235.5 590,223.0 591,234.0 592,237.0 593,238.5 594,237.0 595,238.5 596,236.0 597,239.0 598,248.0 599,239.0 600,237.0 601,237.0 602,237.0 603,237.5 604,237.0 605,236.5 606,238.0 607,237.5 608,235.5 609,236.5 610,235.5 611,236.0 612,237.0 613,239.0 614,250.0 615,239.0 616,236.0 617,238.0 618,237.0 619,237.0 620,237.0 621,235.5 622,238.5 623,236.5 624,236.5 625,224.0 626,234.0 627,235.5 628,237.0 629,237.5 630,237.5 631,237.5 632,237.0 633,235.5 634,226.0 635,234.0 636,237.5 637,236.5 638,235.5 639,237.5 640,238.0 641,236.0 642,239.0 643,251.0 644,239.0 645,237.0 646,235.5 647,236.0 648,237.0 649,236.0 650,236.5 651,238.0 652,235.5 653,239.0 654,250.0 655,239.0 656,237.0 657,237.0 658,236.0 659,236.5 660,238.0 661,237.5 662,238.5 663,236.5 664,237.0 665,236.5 666,235.5 667,228.0 668,263.0 669,239.0 670,237.0 671,236.0 672,235.5 673,235.5 674,236.5 675,237.5 676,236.0 677,239.0 678,251.0 679,239.0 680,235.5 681,237.0 682,238.5 683,237.0 684,235.5 685,238.5 686,236.0 687,236.0 688,236.0 689,239.0 690,243.0 691,239.0 692,237.0 693,237.0 694,237.0 695,237.0 696,238.5 697,238.5 698,238.0 699,236.0 700,238.5 701,239.0 702,250.0 703,239.0 704,236.0 705,236.5 706,237.5 707,237.0 708,237.0 709,236.5 710,235.5 711,238.5 712,235.5 713,238.5 714,237.0 715,239.0 716,248.0 717,239.0 718,237.0 719,237.0 720,238.5 721,238.5 722,238.5 723,236.0 724,237.0 725,237.0 726,236.0 727,238.5 728,235.5 729,237.0 730,238.5 731,239.0 732,246.0 733,239.0 734,238.0 735,237.0 736,237.0 737,236.0 738,236.0 739,236.5 740,237.0 741,237.5 742,226.0 743,234.0 744,236.0 745,237.5 746,237.0 747,238.5 748,238.5 749,239.0 750,243.0 751,239.0 752,235.5 753,238.5 754,238.5 755,238.0 756,237.0 757,236.5 758,238.0 759,239.0 760,246.0 761,239.0 762,236.0 763,237.5 764,235.5 765,237.5 766,237.5 767,238.0 768,236.0 769,237.0 770,239.0 771,245.0 772,239.0 773,237.5 774,236.0 775,238.0 776,238.0 777,236.0 778,237.5 779,238.0 780,237.0 781,235.5 782,237.0 783,236.0 784,235.5 785,237.0 786,236.5 787,237.0 788,237.0 789,239.0 790,251.0 791,239.0 792,237.5 793,238.0 794,235.5 795,238.0 796,237.0 797,239.0 798,248.0 799,239.0 800,238.5 801,236.5 802,237.0 803,238.5 804,235.5 805,236.5 806,236.5 807,238.5 808,238.0 809,228.0 810,234.0 811,237.0 812,237.0 813,237.0 814,238.0 815,237.0 816,237.0 817,238.5 818,238.0 819,239.0 820,244.0 821,239.0 822,236.0 823,237.0 824,238.5 825,237.0 826,238.5 827,237.5 828,238.5 829,238.0 830,236.5 831,237.0 832,237.0 833,236.0 834,236.5 835,237.5 836,236.0 837,237.5 838,239.0 839,248.0 840,239.0 841,237.0 842,235.5 843,238.0 844,238.0 845,238.0 846,237.0 847,238.0 848,237.0 849,237.5 850,235.5 851,238.5 852,226.0 853,234.0 854,236.5 855,237.0 856,236.0 857,237.0 858,237.0 859,238.0 860,223.0 861,234.0 862,238.0 863,239.0 864,251.0 865,239.0 866,235.5 867,238.0 868,223.0 869,234.0 870,235.5 871,236.0 872,238.0 873,224.0 874,234.0 875,237.0 876,236.0 877,237.0 878,236.5 879,239.0 880,243.0 881,239.0 882,236.0 883,235.5 884,235.5 885,236.5 886,237.0 887,235.5 888,237.0 889,236.5 890,229.0 891,234.0"/></svg>
<div class="hid" style="position:absolute;left:639px;top:394px;width:13px;height:8px;box-sizing:border-box;border:1px dotted #000"></div>
<svg class="hid" style="position:absolute;left:940px;top:40px" width="10" height="270" viewBox="940 40 10 270"><rect x="943.8" y="47" width="1.4" height="257" fill="#000"/></svg>
<div class="hid" style="position:absolute;left:939px;top:170px;width:11px;height:11px;border-radius:50%;background:#0000fa"></div>
<div class="btn" style="left:964px;top:104px;width:20px;height:15px"></div>
<span class="t" id="t75" style="left:971.62px;top:102.00px;transform:scaleX(0.9308);font-weight:normal;-webkit-text-stroke:0.2px #000;">-</span>
<div class="btn" style="left:964px;top:168px;width:20px;height:15px"></div>
<span class="t" id="t76" style="left:971.62px;top:166.00px;transform:scaleX(0.9308);font-weight:normal;-webkit-text-stroke:0.2px #000;">-</span>
<div class="btn" style="left:964px;top:232px;width:20px;height:15px"></div>
<span class="t" id="t77" style="left:971.62px;top:230.00px;transform:scaleX(0.9308);font-weight:normal;-webkit-text-stroke:0.2px #000;">-</span>
<span class="t" id="t78" style="left:22.74px;top:-7.36px;transform:scaleX(0.9982);font-weight:normal;font-size:12px;-webkit-text-stroke:0.4px #000;">Windows SMC3 Setup and Monitor Utility</span>
</body></html>
